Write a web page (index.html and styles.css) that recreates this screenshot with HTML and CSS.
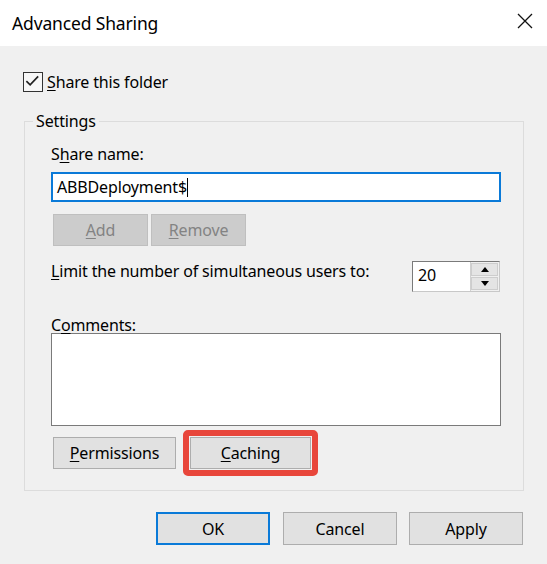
FILE: index.html
```html
<!DOCTYPE html>
<html lang="en">
<head>
<meta charset="utf-8">
<title>Advanced Sharing</title>
<link rel="stylesheet" href="styles.css">
</head>
<body>
<div class="window">
  <div class="titlebar">
    <span class="title">Advanced Sharing</span>
    <svg class="close" viewBox="0 0 16 16" aria-label="Close"><path d="M1 1 L15 15 M15 1 L1 15" stroke="#111" stroke-width="1.3" fill="none"/></svg>
  </div>
  <div class="content">
    <div class="check-row">
      <span class="checkbox"><svg viewBox="0 0 18 18"><polyline points="2.5,8.5 6.5,12.5 15,3.5" fill="none" stroke="#222" stroke-width="1.8"/></svg></span>
      <span><u>S</u>hare this folder</span>
    </div>
    <fieldset class="group">
      <legend>Settings</legend>
      <div class="label">S<u>h</u>are name:</div>
      <div class="textbox"><span>ABBDeployment$</span><span class="caret"></span></div>
      <div class="btn-row">
        <button class="btn btn-small disabled"><u>A</u>dd</button>
        <button class="btn btn-small disabled"><u>R</u>emove</button>
      </div>
      <div class="limit-row">
        <span class="limit-text"><u>L</u>imit the number of simultaneous users to:</span>
        <div class="spinner">
          <span class="spin-value">20</span>
          <div class="spin-btns">
            <span class="spin-btn"><span class="tri-up"></span></span>
            <span class="spin-btn"><span class="tri-down"></span></span>
          </div>
        </div>
      </div>
      <div class="label comments-label">C<u>o</u>mments:</div>
      <div class="textarea"></div>
      <div class="action-row">
        <button class="btn btn-perm"><u>P</u>ermissions</button>
        <span class="highlight"><button class="btn btn-cache"><u>C</u>aching</button></span>
      </div>
    </fieldset>
    <div class="footer">
      <button class="btn btn-foot btn-default">OK</button>
      <button class="btn btn-foot">Cancel</button>
      <button class="btn btn-foot">Apply</button>
    </div>
  </div>
</div>
</body>
</html>
```
FILE: styles.css
```css
html, body {
  margin: 0;
  padding: 0;
}
body {
  width: 547px;
  height: 564px;
  overflow: hidden;
  background: #f0f0f0;
  font-family: "Noto Sans", "Open Sans", sans-serif;
  font-size: 16px;
  letter-spacing: -0.15px;
  color: #000;
}
u {
  text-decoration-thickness: 1px;
  text-underline-offset: 2px;
}
.titlebar {
  height: 46px;
  background: #fff;
  display: flex;
  justify-content: space-between;
  align-items: flex-start;
}
.title {
  margin-left: 12px;
  line-height: 46px;
  font-size: 17.5px;
}
.close {
  width: 16px;
  height: 16px;
  margin: 13px 14px 0 0;
}
.content {
  padding-top: 26px;
}
.check-row {
  display: flex;
  align-items: center;
  gap: 4px;
  margin-left: 23px;
  height: 20px;
  line-height: 20px;
}
.checkbox {
  width: 20px;
  height: 20px;
  box-sizing: border-box;
  border: 1.5px solid #333;
  background: #f7f7f7;
  display: flex;
}
.checkbox svg {
  width: 17px;
  height: 17px;
}
.group {
  margin: 19px 0 0 24px;
  width: 500px;
  min-width: 0;
  box-sizing: border-box;
  border: 1px solid #dcdcdc;
  padding: 0 22px 14px 26px;
}
.group legend {
  padding: 0 3px;
  margin-left: -18px;
  line-height: 20px;
}
.label {
  line-height: 20px;
  margin-top: 13px;
}
.textbox {
  margin-top: 8px;
  height: 30px;
  box-sizing: border-box;
  border: 2px solid #0a7ad8;
  background: #fff;
  padding-left: 4px;
  line-height: 26px;
  display: flex;
  align-items: center;
}
.caret {
  width: 1px;
  height: 19px;
  background: #000;
}
.btn {
  font: inherit;
  letter-spacing: inherit;
  color: #000;
  background: #e1e1e1;
  border: 1px solid #adadad;
  padding: 0;
  margin: 0;
  box-sizing: border-box;
  line-height: 28px;
}
.btn-row {
  display: flex;
  gap: 3px;
  margin: 12px 0 0 2px;
}
.btn-small {
  width: 95px;
  height: 32px;
}
.btn.disabled {
  background: #cccccc;
  border-color: #bfbfbf;
  color: #838383;
}
.limit-row {
  display: flex;
  justify-content: space-between;
  align-items: flex-start;
  margin: 15px 1px 0 0;
}
.limit-text {
  line-height: 20px;
}
.spinner {
  width: 88px;
  height: 31px;
  box-sizing: border-box;
  border: 1px solid;
  border-color: #7a7a7a #c8c8c8 #c8c8c8 #7a7a7a;
  background: #fff;
  display: flex;
}
.spin-value {
  flex: 1;
  padding-left: 5px;
  line-height: 27px;
}
.spin-btns {
  width: 27px;
  display: flex;
  flex-direction: column;
  gap: 1px;
  padding: 1px 1px 1px 0;
  background: #f0f0f0;
  border-left: 1px solid #d0d0d0;
}
.spin-btn {
  flex: 1;
  display: flex;
  align-items: center;
  justify-content: center;
  background: #e4e4e4;
  border: 1px solid #cdcdcd;
}
.tri-up {
  width: 0;
  height: 0;
  border-left: 4px solid transparent;
  border-right: 4px solid transparent;
  border-bottom: 5px solid #000;
}
.tri-down {
  width: 0;
  height: 0;
  border-left: 4px solid transparent;
  border-right: 4px solid transparent;
  border-top: 5px solid #000;
}
.comments-label {
  margin-top: 23px;
  height: 18px;
}
.textarea {
  height: 93px;
  box-sizing: border-box;
  border: 1px solid #7a7a7a;
  background: #fff;
}
.action-row {
  display: flex;
  align-items: center;
  gap: 7px;
  margin: 4px 0 0 2px;
}
.btn-perm {
  width: 123px;
  height: 32px;
}
.highlight {
  display: flex;
  border: 6px solid #e8463b;
  border-radius: 5px;
  padding: 1px;
}
.btn-cache {
  width: 121px;
  height: 32px;
}
.footer {
  display: flex;
  justify-content: flex-end;
  gap: 12px;
  margin-top: 21px;
  padding-right: 24px;
}
.btn-foot {
  width: 114px;
  height: 33px;
}
.btn-default {
  border: 2px solid #0a7ad8;
  margin-right: 1px;
}
```
